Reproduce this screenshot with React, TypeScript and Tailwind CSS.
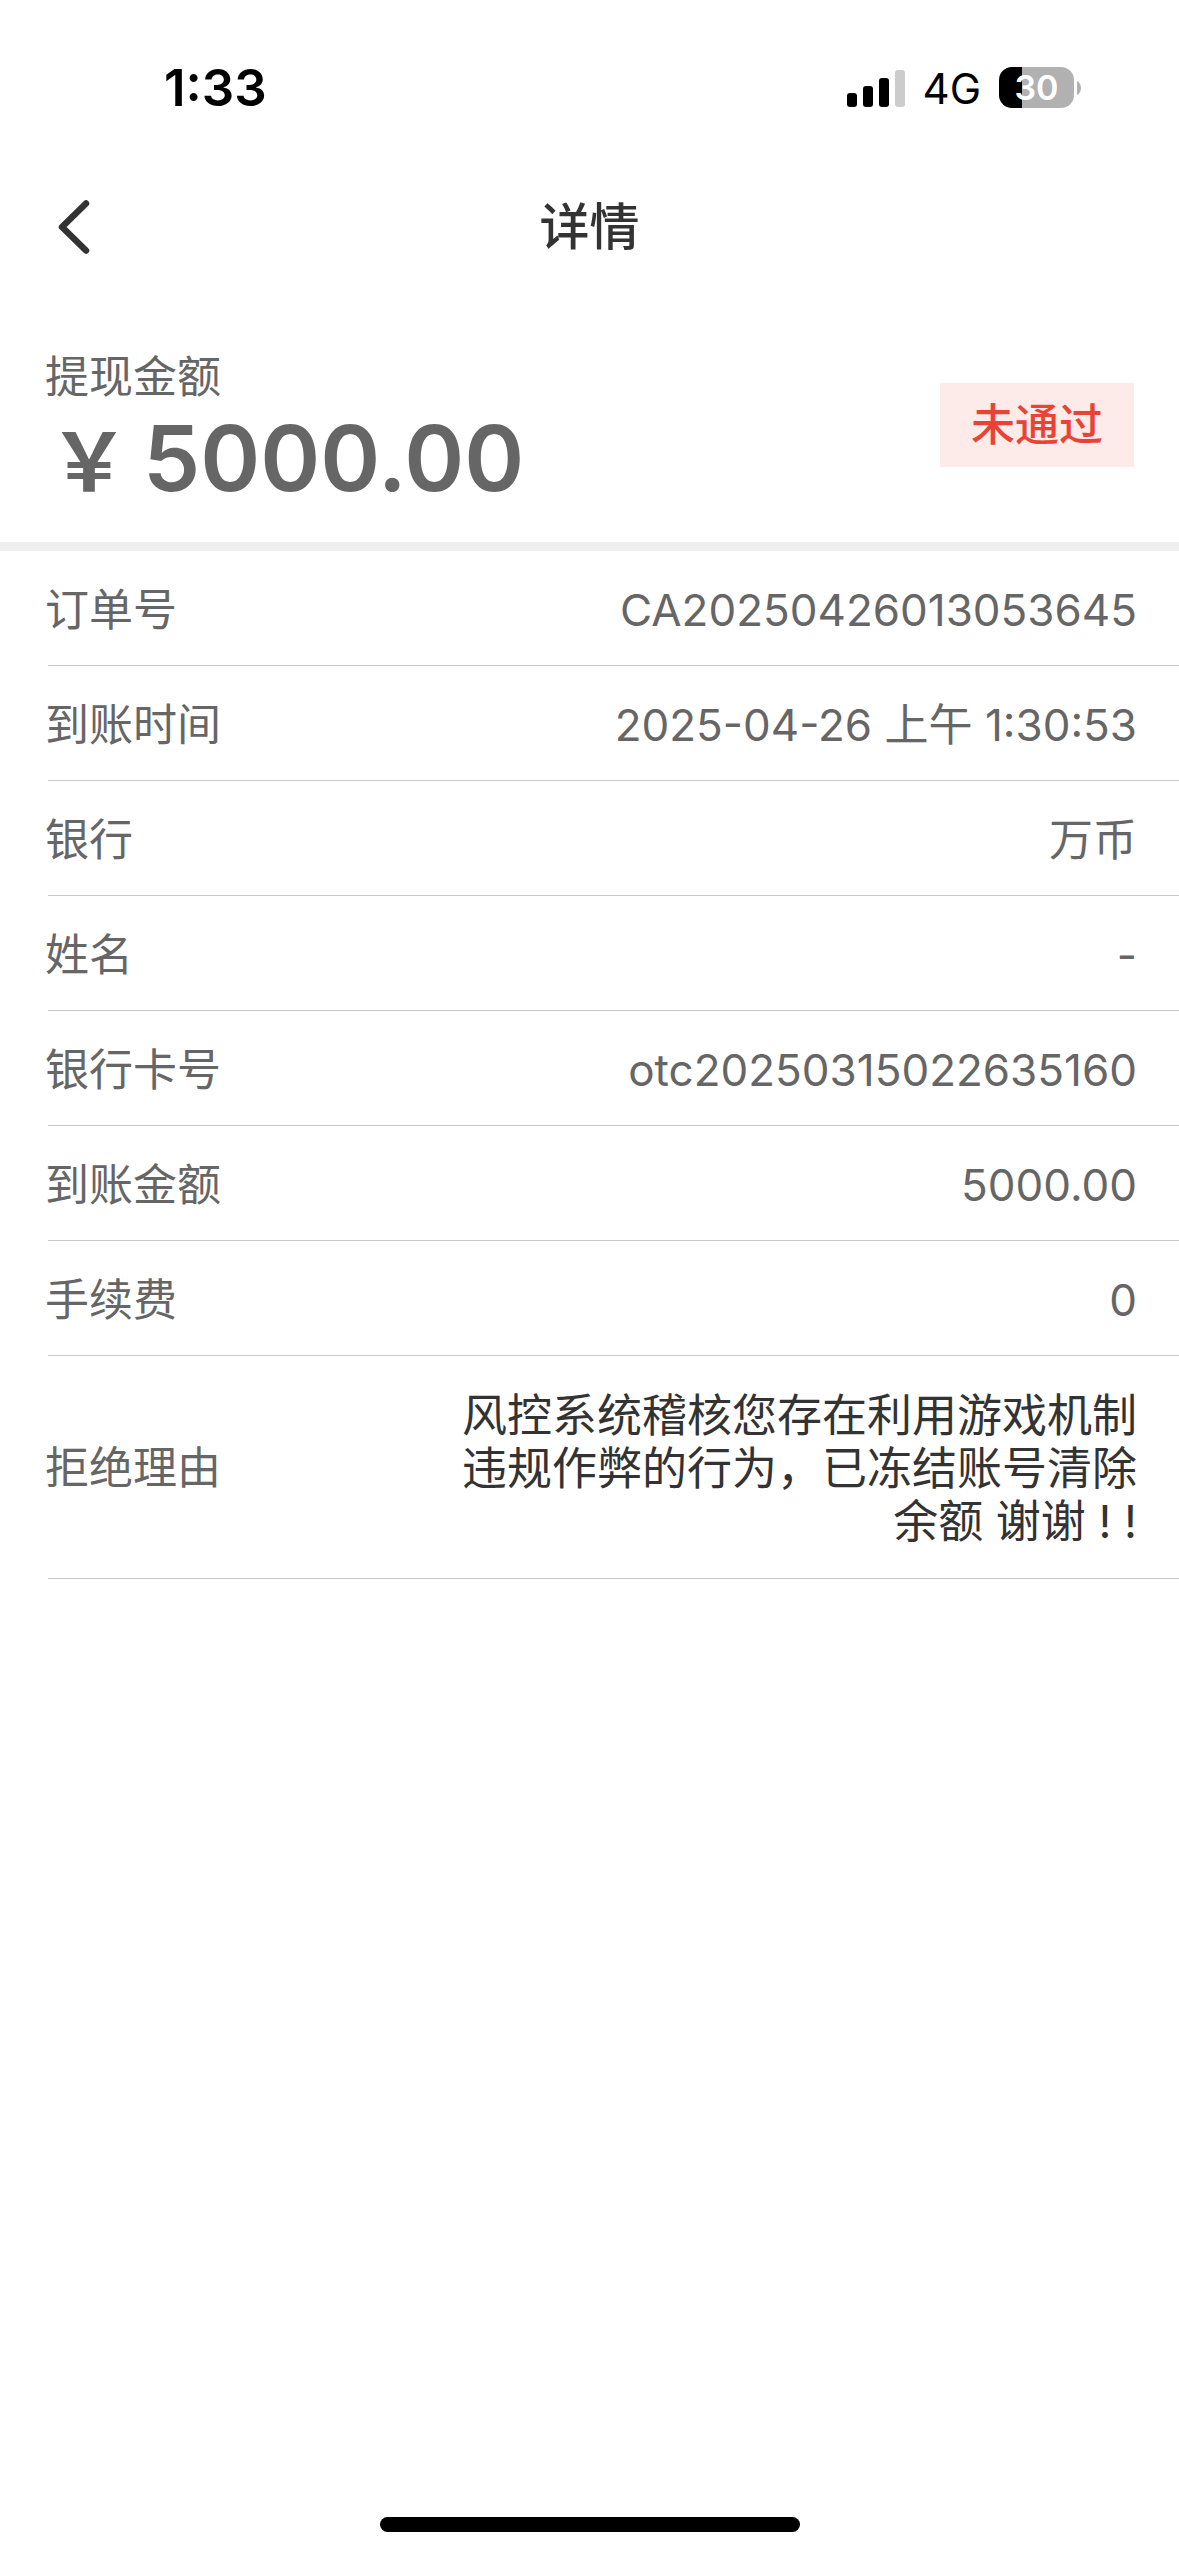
import React from 'react';

interface DetailRow {
  label: string;
  value: string;
}

const rows: DetailRow[] = [
  { label: '订单号', value: 'CA20250426013053645' },
  { label: '到账时间', value: '2025-04-26 上午 1:30:53' },
  { label: '银行', value: '万币' },
  { label: '姓名', value: '-' },
  { label: '银行卡号', value: 'otc20250315022635160' },
  { label: '到账金额', value: '5000.00' },
  { label: '手续费', value: '0' },
];

const App: React.FC = () => {
  return (
    <div
      lang="zh-CN"
      className="min-h-screen flex flex-col bg-white text-[#666666] font-['Inter','Noto_Sans_CJK_SC',sans-serif]"
    >
      <StatusBar />

      {/* Nav bar */}
      <header className="grid grid-cols-[1fr_auto_1fr] items-center h-[132px] pt-[2px] px-[48px] text-[#333333]">
        <button type="button" aria-label="返回" className="w-[52px] h-[66px] flex items-center justify-center">
          <svg width="32" height="54" viewBox="0 0 32 54" fill="none">
            <path d="M28 3.500 4 27l24 23.500" stroke="currentColor" strokeWidth="6.5" strokeLinecap="round" strokeLinejoin="round" />
          </svg>
        </button>
        <h1 className="text-[50px] leading-[66px] font-medium">详情</h1>
      </header>

      {/* Amount */}
      <section className="flex items-center justify-between h-[259px] pt-[16px] px-[45px] border-b-[9px] border-[#efefef]">
        <div className="pt-[16px]">
          <p className="text-[44px] leading-[54px]">提现金额</p>
          <p className="text-[91px] leading-[108px] font-semibold">
            <span className="ml-[4px] mr-[14px] text-[80px]">￥</span>5000.00
          </p>
        </div>
        <span className="px-[31px] py-[15px] text-[44px] leading-[54px] font-medium text-[#ea4335] bg-[#fdebe9]">未通过</span>
      </section>

      {/* Order details */}
      <dl className="text-[44px] leading-[53px]">
        {rows.map((row) => (
          <div key={row.label} className="ml-[48px] h-[115px] flex items-center justify-between pt-[4px] pr-[42px] border-b border-[#c8c8c8]">
            <dt className="-ml-[3px]">{row.label}</dt>
            <dd>{row.value}</dd>
          </div>
        ))}
        <div className="ml-[48px] pt-[33px] pb-[30px] flex items-center justify-between pr-[42px] border-b border-[#c8c8c8]">
          <dt className="-ml-[3px]">拒绝理由</dt>
          <dd className="w-[680px] text-right text-[45px] text-[#333333]">
            风控系统稽核您存在利用游戏机制违规作弊的行为，已冻结账号清除余额 谢谢 ! !
          </dd>
        </div>
      </dl>

      {/* Home indicator */}
      <div className="mt-auto mb-[24px] mx-auto w-[420px] h-[15px] rounded-full bg-black" />
    </div>
  );
};

const StatusBar: React.FC = () => {
  return (
    <div className="flex items-center justify-between h-[160px] pt-[15px] pl-[164px] pr-[98px] text-black">
      <time className="text-[51px] leading-[60px] font-semibold">1:33</time>
      <div className="flex items-center gap-[18px]">
        <svg width="58" height="38" viewBox="0 0 58 38">
          <rect x="0" y="24" width="10" height="14" rx="3" />
          <rect x="16" y="17" width="10" height="21" rx="3" />
          <rect x="32" y="9" width="10" height="29" rx="3" />
          <rect x="48" y="1" width="10" height="37" rx="3" fill="#cccccc" />
        </svg>
        <span className="pt-[2px] text-[42px] leading-[48px]">4G</span>
        <div className="flex items-center gap-[3px]">
          <div className="w-[75px] h-[41px] rounded-[13px] flex items-center justify-center text-[34px] leading-[41px] font-semibold text-white bg-[linear-gradient(to_right,#000_23px,#b1b1b1_23px)]">
            30
          </div>
          <svg width="4" height="14" viewBox="0 0 4 14">
            <path d="M0 0c2.500 1 4 4 4 7s-1.500 6-4 7z" fill="#b1b1b1" />
          </svg>
        </div>
      </div>
    </div>
  );
};

export default App;
